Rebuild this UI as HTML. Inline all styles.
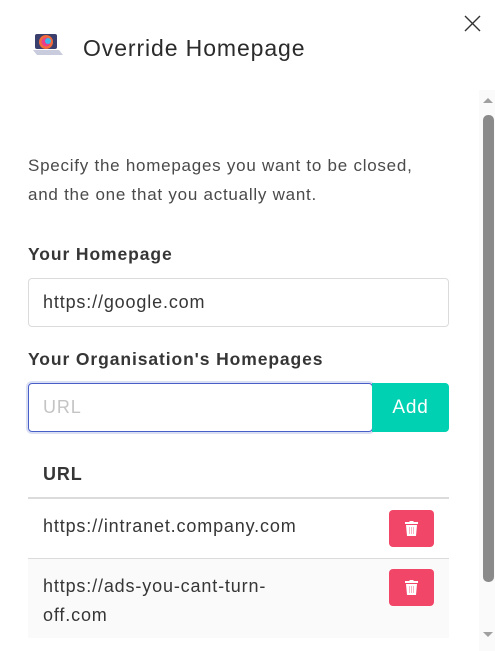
<!DOCTYPE html>
<html><head><meta charset="utf-8"><style>
*{box-sizing:border-box;margin:0;padding:0}
body{width:495px;height:651px;overflow:hidden;background:#fff;font-family:"Liberation Sans",sans-serif;color:#363636;position:relative}
.abs{position:absolute}
.title{left:83px;top:34px;font-size:23px;letter-spacing:0.9px;color:#2b2b2b;line-height:28px}
.p{left:28px;top:151px;font-size:17px;letter-spacing:0.75px;line-height:29px;color:#4a4a4a}
.lab{left:28px;font-size:17.5px;letter-spacing:0.9px;font-weight:bold;color:#363636}
.t{font-size:18px;letter-spacing:0.85px}
.inp{border:1px solid #dbdbdb;border-radius:4px;padding-left:14px;display:flex;align-items:center}
.del{width:45px;height:37px;background:#f14668;border-radius:4px;left:389px}
.trash{position:absolute;left:16px;top:11px;width:13px;height:15px}
</style></head><body>
<svg class="abs" style="left:30px;top:28px" width="36" height="36" viewBox="0 0 36 36">
<rect x="5" y="6" width="22" height="15" rx="2" fill="#3b3f6e"/>
<circle cx="16" cy="14" r="7" fill="#f26b3a"/><circle cx="16" cy="14" r="4.5" fill="#e83e8c"/><circle cx="18" cy="13" r="3" fill="#3fb7e8"/>
<path d="M3 22 L29 22 L33 27 L7 27 Z" fill="#c9ccdc"/>
</svg>
<div class="abs title">Override Homepage</div>
<svg class="abs" style="left:464px;top:15px" width="17" height="17" viewBox="0 0 17 17"><path d="M1 1L16 16M16 1L1 16" stroke="#333" stroke-width="1.4"/></svg>
<div class="abs" style="left:479px;top:90px;width:16px;height:561px;background:#fafafa"></div>
<svg class="abs" style="left:482px;top:96px" width="12" height="8"><path d="M1 7L6 2L11 7Z" fill="#a0a0a0"/></svg>
<div class="abs" style="left:483px;top:115px;width:11px;height:467px;background:#8a8a8a;border-radius:5px"></div>
<svg class="abs" style="left:482px;top:631px" width="12" height="8"><path d="M1 1L6 6L11 1Z" fill="#a0a0a0"/></svg>
<div class="abs p">Specify the homepages you want to be closed,<br>and the one that you actually want.</div>
<div class="abs lab" style="top:244px">Your Homepage</div>
<div class="abs inp t" style="left:28px;top:278px;width:421px;height:49px">https://google.com</div>
<div class="abs lab" style="top:349px">Your Organisation's Homepages</div>
<div class="abs inp t" style="left:28px;top:383px;width:345px;height:49px;border-color:#485fc7;color:#c4c4c4;box-shadow:0 0 0 2px rgba(72,95,199,.2)">URL</div>
<div class="abs t" style="left:372px;top:383px;width:77px;height:49px;background:#00d1b2;border-radius:0 4px 4px 0;color:#fff;font-size:19px;display:flex;align-items:center;justify-content:center">Add</div>
<div class="abs t" style="left:43px;top:464px;font-weight:bold">URL</div>
<div class="abs" style="left:28px;top:497px;width:421px;height:2px;background:#dbdbdb"></div>
<div class="abs t" style="left:43px;top:516px">https://intranet.company.com</div>
<div class="abs del" style="top:510px"><svg class="trash" viewBox="0 0 13 15"><rect x="0" y="1" width="13" height="2" fill="#fff"/><rect x="4.5" y="0" width="4" height="2" fill="#fff"/><path d="M1 4H12L11 15H2Z" fill="#fff"/><path d="M4.5 6V13M6.5 6V13M8.5 6V13" stroke="#f7a0b2" stroke-width="0.8"/></svg></div>
<div class="abs" style="left:28px;top:558px;width:421px;height:1px;background:#dbdbdb"></div>
<div class="abs" style="left:28px;top:559px;width:421px;height:79px;background:#fafafa"></div>
<div class="abs t" style="left:43px;top:572px;line-height:29px">https://ads-you-cant-turn-<br>off.com</div>
<div class="abs del" style="top:569px"><svg class="trash" viewBox="0 0 13 15"><rect x="0" y="1" width="13" height="2" fill="#fff"/><rect x="4.5" y="0" width="4" height="2" fill="#fff"/><path d="M1 4H12L11 15H2Z" fill="#fff"/><path d="M4.5 6V13M6.5 6V13M8.5 6V13" stroke="#f7a0b2" stroke-width="0.8"/></svg></div>
</body></html>
